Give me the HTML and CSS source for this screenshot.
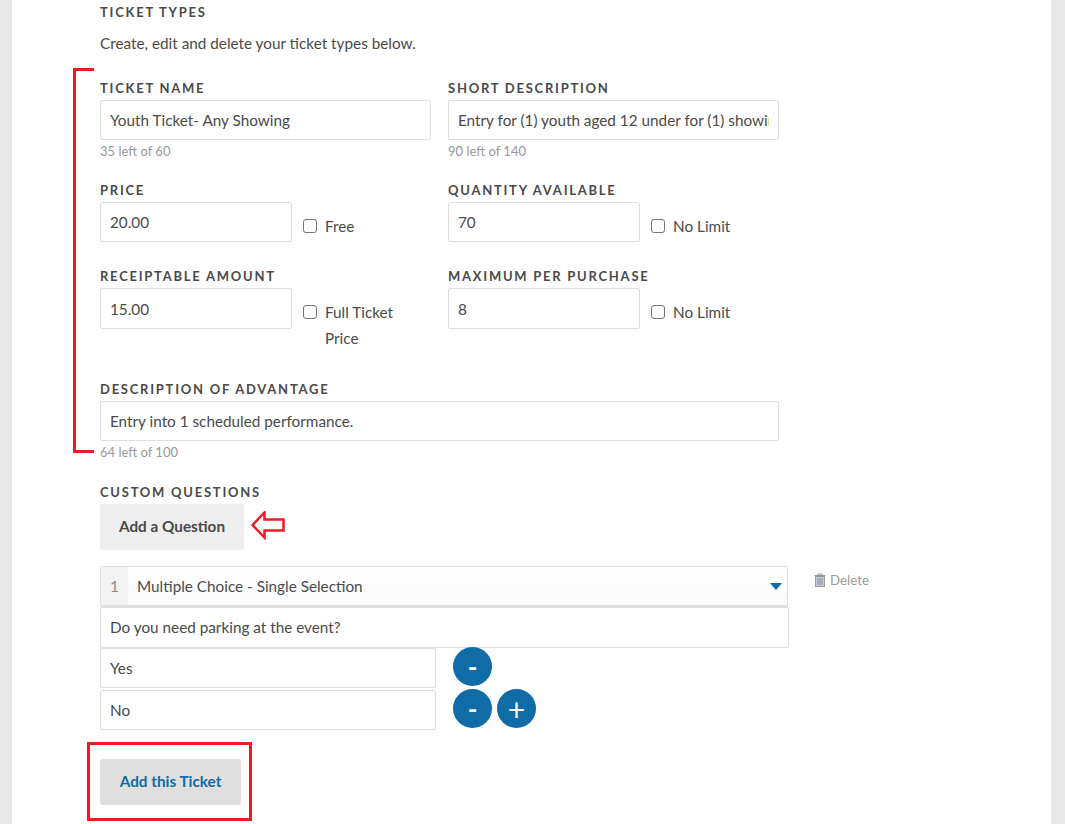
FILE: index.html
```html
<!DOCTYPE html>
<html lang="en">
<head>
<meta charset="utf-8">
<title>Ticket Types</title>
<link rel="stylesheet" href="styles.css">
</head>
<body>
<main class="panel">
  <h2 class="label heading">Ticket Types</h2>
  <p class="intro">Create, edit and delete your ticket types below.</p>

  <div class="row row-name">
    <div class="col">
      <label class="label">Ticket Name</label>
      <div class="input">Youth Ticket- Any Showing</div>
      <div class="hint">35 left of 60</div>
    </div>
    <div class="col">
      <label class="label">Short Description</label>
      <div class="input"><span class="clip">Entry for (1) youth aged 12 under for (1) showing</span></div>
      <div class="hint">90 left of 140</div>
    </div>
  </div>

  <div class="row row-price">
    <div class="col">
      <label class="label">Price</label>
      <div class="inline">
        <div class="input short">20.00</div>
        <div class="check"><span class="box"></span><span>Free</span></div>
      </div>
    </div>
    <div class="col">
      <label class="label">Quantity Available</label>
      <div class="inline">
        <div class="input short">70</div>
        <div class="check"><span class="box"></span><span>No Limit</span></div>
      </div>
    </div>
  </div>

  <div class="row row-amount">
    <div class="col">
      <label class="label">Receiptable Amount</label>
      <div class="inline">
        <div class="input short tall">15.00</div>
        <div class="check"><span class="box"></span><span class="wrap">Full Ticket Price</span></div>
      </div>
    </div>
    <div class="col">
      <label class="label">Maximum Per Purchase</label>
      <div class="inline">
        <div class="input short tall">8</div>
        <div class="check"><span class="box"></span><span>No Limit</span></div>
      </div>
    </div>
  </div>

  <div class="advantage">
    <label class="label">Description of Advantage</label>
    <div class="input wide">Entry into 1 scheduled performance.</div>
    <div class="hint">64 left of 100</div>
  </div>

  <div class="questions">
    <label class="label">Custom Questions</label>
    <button class="btn btn-add" type="button">Add a Question</button>
  </div>

  <div class="select-row">
    <div class="select">
      <span class="num">1</span>
      <span class="select-text">Multiple Choice - Single Selection</span>
      <span class="caret"></span>
    </div>
    <div class="delete">
      <svg class="trash" width="12" height="14" viewBox="0 0 12 14" aria-hidden="true">
        <path d="M4 2V1h4v1M.5 2.500h11" fill="none" stroke="#9a9a9a" stroke-width="1"/>
        <rect x="1.500" y="3.500" width="9" height="10" fill="#c3cfdd" stroke="#9a9a9a"/>
        <path d="M4 5v7M6 5v7M8 5v7" stroke="#8a8f96" stroke-width="1"/>
      </svg>
      <span>Delete</span>
    </div>
  </div>
  <div class="input question">Do you need parking at the event?</div>
  <div class="option">
    <div class="input answer">Yes</div>
    <span class="round">-</span>
  </div>
  <div class="option option-last">
    <div class="input answer">No</div>
    <span class="round">-</span>
    <span class="round round-plus">+</span>
  </div>

  <button class="btn btn-submit" type="button">Add this Ticket</button>

  <span class="bracket"></span>
  <svg class="arrow" width="34" height="29" viewBox="0 0 34 29" aria-hidden="true">
    <path d="M1.500 14 13.500 1.500v7H32.500v11H13.500v7z" fill="none" stroke="#ed1c24" stroke-width="2.500"/>
  </svg>
  <span class="callout"></span>
</main>
</body>
</html>
```
FILE: styles.css
```css
* { box-sizing: border-box; }
html, body { margin: 0; height: 824px; overflow: hidden; }
body {
  background: #e8e8e8;
  font-family: Lato, "Liberation Sans", sans-serif;
  color: #4a4a4a;
  font-size: 15.3px;
}
.panel {
  position: relative;
  width: 1039px;
  height: 824px;
  margin-left: 12px;
  padding: 5px 0 0 88px;
  background: #fff;
}
.label {
  display: block;
  font-size: 13px;
  line-height: 14px;
  font-weight: 700;
  letter-spacing: 1.75px;
  text-transform: uppercase;
  color: #4a4a4a;
}
.heading { margin: 0; }
.intro { margin: 15px 0 0; line-height: 18px; height: 18px; }
.row { display: grid; grid-template-columns: 331px 331px; column-gap: 17px; }
.row-name { margin-top: 29px; }
.row-price { margin-top: 24px; }
.row-amount { margin-top: 27px; }
.input {
  display: flex;
  align-items: center;
  height: 40px;
  margin-top: 5px;
  padding: 0 9px;
  border: 1px solid #dedede;
  border-radius: 2px;
  background: #fff;
  white-space: nowrap;
  overflow: hidden;
  line-height: 18px;
}
.clip { display: block; min-width: 0; overflow: hidden; }
.short { width: 192px; flex: none; }
.tall { height: 41px; }
.wide { width: 679px; }
.hint { margin-top: 4px; font-size: 13px; line-height: 15px; color: #999; }
.inline { display: flex; align-items: flex-start; }
.check { display: flex; align-items: flex-start; margin-left: 11px; padding-top: 16px; line-height: 26px; }
.box {
  flex: none;
  width: 14px;
  height: 14px;
  margin: 6px 8px 0 0;
  border: 1px solid #767676;
  border-radius: 3px;
  background: #fff;
}
.wrap { width: 80px; }
.advantage { margin-top: 31px; }
.questions { margin-top: 25px; }
.btn {
  display: block;
  height: 46px;
  padding: 0 0 2px;
  border: 0;
  border-radius: 3px;
  font: 700 15.300px Lato, "Liberation Sans", sans-serif;
}
.btn-add { width: 144px; margin-top: 5px; background: #eee; color: #4a4a4a; }
.select-row { display: flex; align-items: flex-start; margin-top: 16px; }
.select {
  display: flex;
  align-items: center;
  width: 688px;
  height: 41px;
  border: 1px solid #dedede;
  border-bottom-width: 2px;
  border-radius: 2px;
  background: linear-gradient(#fff, #f9fafb);
}
.num {
  width: 27px;
  height: 100%;
  display: flex;
  align-items: center;
  justify-content: center;
  background: #f3f3f3;
  color: #8a8a8a;
}
.select-text { flex: 1; padding-left: 9px; }
.caret {
  width: 0;
  height: 0;
  margin-right: 5px;
  border-left: 6px solid transparent;
  border-right: 6px solid transparent;
  border-top: 7px solid #0f6ca6;
}
.delete {
  display: flex;
  align-items: center;
  gap: 4px;
  margin: 6px 0 0 26px;
  font-size: 13.300px;
  line-height: 16px;
  color: #9a9a9a;
}
.question { width: 689px; height: 41px; margin-top: 0; padding-bottom: 1px; }
.option { display: flex; align-items: flex-start; height: 42px; }
.option-last { height: 40px; }
.answer { width: 336px; margin-top: 0; flex: none; }
.round {
  flex: none;
  display: flex;
  align-items: center;
  justify-content: center;
  width: 39px;
  height: 39px;
  margin-left: 5px;
  border-radius: 50%;
  background: #0f6ca6;
  color: #fff;
  font-size: 26px;
  font-weight: 700;
  line-height: 1;
}
.round-plus { font-size: 30px; font-weight: 400; }
.answer + .round { margin-left: 17px; margin-top: -1px; }
.answer + .round + .round { margin-top: -1px; }
.btn-submit { width: 141px; margin-top: 29px; background: #dfdfdf; color: #0f6ca6; }
.bracket {
  position: absolute;
  left: 61px;
  top: 68px;
  width: 21px;
  height: 385px;
  border: 3px solid #ed1c24;
  border-right: 0;
}
.arrow { position: absolute; left: 239px; top: 511px; }
.callout {
  position: absolute;
  left: 75px;
  top: 742px;
  width: 165px;
  height: 79px;
  border: 3px solid #ed1c24;
}
```
